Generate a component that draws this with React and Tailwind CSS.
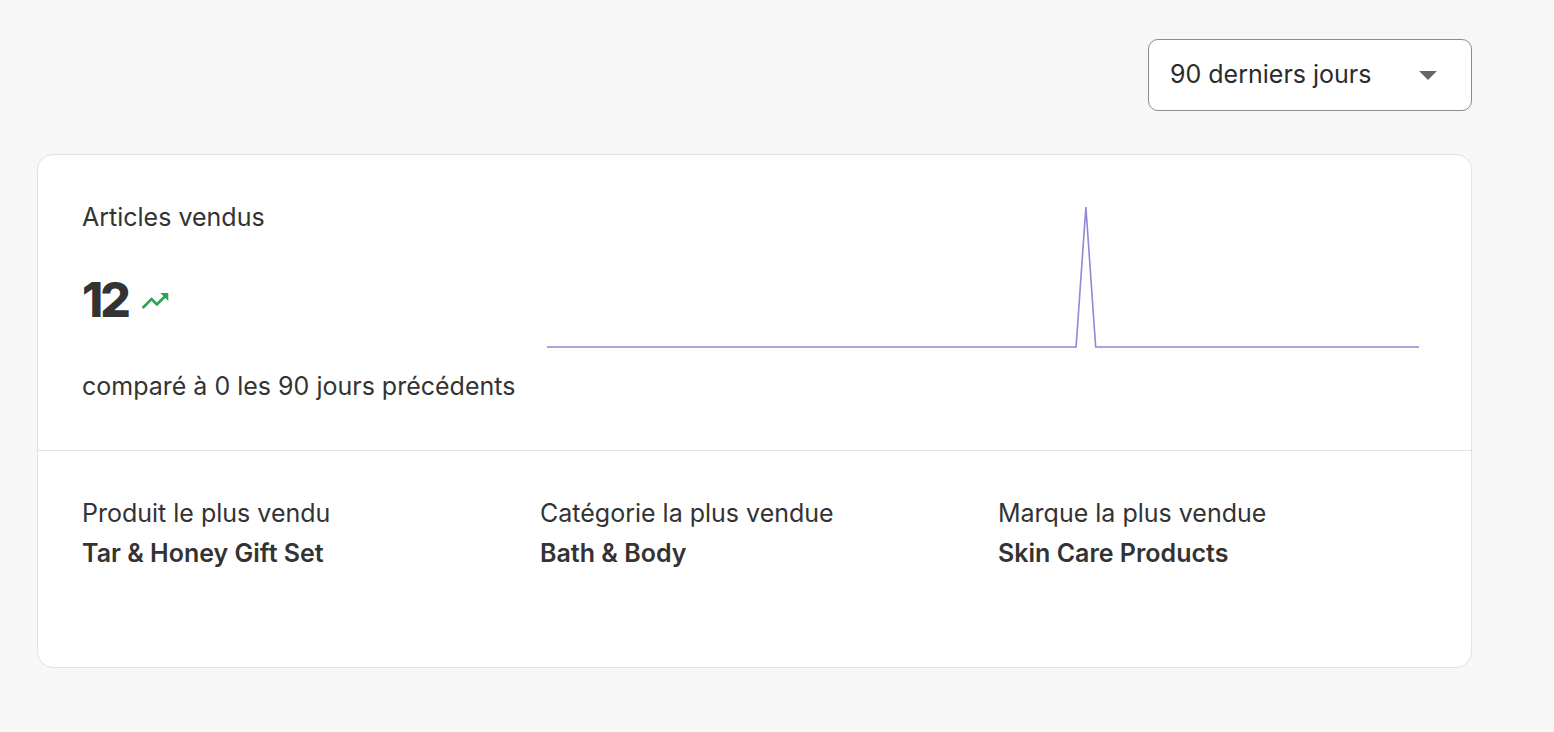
import React from 'react';
import { MdTrendingUp } from 'react-icons/md';

const points = (() => {
  // 90 days, one spike of sales
  const data = Array.from({ length: 90 }, () => 0);
  data[55] = 12;
  return data;
})();

const Sparkline = ({ data }) => {
  const w = 872;
  const h = 142;
  const max = Math.max(...data);
  const step = w / (data.length - 1);
  const d = data
    .map((v, i) => `${i === 0 ? 'M' : 'L'}${(i * step).toFixed(2)},${(h - 1 - (v / max) * (h - 2)).toFixed(2)}`)
    .join(' ');
  return (
    <svg width={w} height={h} viewBox={`0 0 ${w} ${h}`} className="block">
      <path d={d} fill="none" stroke="#8f89d6" strokeWidth="1.6" strokeLinejoin="miter" />
    </svg>
  );
};

const TopItem = ({ label, value }) => (
  <div className="flex flex-col gap-1">
    <span className="text-[25px] leading-[36px]">{label}</span>
    <span className="text-[25px] leading-[36px] font-semibold">{value}</span>
  </div>
);

export default function App() {
  return (
    <div className="min-h-screen bg-[#f7f7f7] pl-[37px] pr-[82px] pt-[39px] text-[#333333] font-['Inter','Liberation_Sans',sans-serif]">
      <div className="flex justify-end">
        <button
          type="button"
          className="flex h-[72px] w-[324px] items-center justify-between rounded-[10px] border border-[#8c8c8c] bg-white pl-[21px] pr-[34px] text-[25px] text-[#2b2b2b]"
        >
          <span>90 derniers jours</span>
          <svg width="18" height="9" viewBox="0 0 18 9">
            <path d="M0 0 L18 0 L9 9 Z" fill="#666666" />
          </svg>
        </button>
      </div>

      <div className="mt-[43px] h-[514px] rounded-[16px] border border-[#e2e2e2] bg-white">
        {/* Articles vendus */}
        <div className="flex h-[296px] border-b border-[#e2e2e2] pl-[44px] pr-[52px] pt-[44px]">
          <div className="w-[465px] shrink-0">
            <div className="text-[25px] leading-[36px]">Articles vendus</div>
            <div className="mt-[41px] flex items-center gap-[11px]">
              <span className="text-[48px] leading-[48px] font-extrabold tracking-[-3px]">12</span>
              <MdTrendingUp className="mt-[2px] h-[32px] w-[32px] text-[#2ea45a]" />
            </div>
            <div className="mt-[44px] text-[25px] leading-[36px]">comparé à 0 les 90 jours précédents</div>
          </div>
          <div className="flex flex-1 justify-end pt-[7px]">
            <Sparkline data={points} />
          </div>
        </div>

        {/* Top ventes */}
        <div className="grid grid-cols-[458px_458px_1fr] pl-[44px] pr-[44px] pt-[44px]">
          <TopItem label="Produit le plus vendu" value="Tar & Honey Gift Set" />
          <TopItem label="Catégorie la plus vendue" value="Bath & Body" />
          <TopItem label="Marque la plus vendue" value="Skin Care Products" />
        </div>
      </div>
    </div>
  );
}
